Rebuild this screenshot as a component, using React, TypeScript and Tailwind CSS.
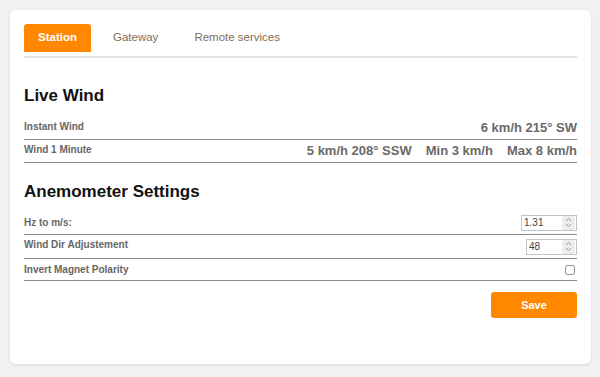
import React, { useState } from 'react';

const Spinner: React.FC = () => (
  <div className="flex h-[14px] w-[13px] flex-col items-center justify-center rounded-[2px] bg-[#ececec]">
    <svg className="h-[5px] w-[7px] text-[#9a9a9a]" viewBox="0 0 7 5" fill="none" stroke="currentColor">
      <path d="M1 4l2.5-2.5L6 4" strokeWidth={1} />
    </svg>
    <svg className="mt-[1px] h-[5px] w-[7px] text-[#9a9a9a]" viewBox="0 0 7 5" fill="none" stroke="currentColor">
      <path d="M1 1l2.5 2.5L6 1" strokeWidth={1} />
    </svg>
  </div>
);

const NumberBox: React.FC<{ value: string; width: string }> = ({ value, width }) => (
  <div className={`flex h-[16px] ${width} items-center justify-between border border-[#c4c4c4] bg-white pl-[2px] pr-[1px]`}>
    <span className="text-[10px] leading-none text-[#444]">{value}</span>
    <Spinner />
  </div>
);

const App: React.FC = () => {
  const [tab, setTab] = useState('Station');
  const tabs = ['Station', 'Gateway', 'Remote services'];

  return (
    <div className="min-h-screen bg-[#f1f1f1] p-[10px] font-['Liberation_Sans',Arial,sans-serif]">
      <div className="h-[354px] w-[581px] rounded-[6px] bg-white px-[14px] pt-[14px] pr-[14px] shadow-[0_1px_3px_rgba(0,0,0,0.1)]">
        {/* Tabs */}
        <div className="flex gap-[8px]">
          {tabs.map((t) => (
            <button
              key={t}
              onClick={() => setTab(t)}
              className={`h-[28px] rounded-t-[3px] px-[14px] text-[11.5px] ${
                tab === t ? 'bg-[#ff8800] font-bold text-white' : 'text-[#7f6d58]'
              }`}
            >
              {t}
            </button>
          ))}
        </div>
        <div className="mt-[4px] h-[2px] bg-[#e2e2e2]" />

        {/* Live Wind */}
        <h2 className="mt-[28px] text-[17px] font-bold leading-[20px] text-[#111]">Live Wind</h2>
        <div className="mt-[11px]">
          <div className="flex h-[23px] items-center justify-between border-b border-[#8c8c8c]">
            <span className="mb-[4px] text-[10px] font-bold text-[#666]">Instant Wind</span>
            <span className="text-[13px] font-bold text-[#6a6a6a]">6 km/h 215° SW</span>
          </div>
          <div className="flex h-[23px] items-center justify-between border-b border-[#8c8c8c]">
            <span className="mb-[4px] text-[10px] font-bold text-[#666]">Wind 1 Minute</span>
            <div className="flex gap-[14px] text-[13px] font-bold text-[#6a6a6a]">
              <span>5 km/h 208° SSW</span>
              <span>Min 3 km/h</span>
              <span>Max 8 km/h</span>
            </div>
          </div>
        </div>

        {/* Anemometer Settings */}
        <h2 className="mt-[19px] text-[17px] font-bold leading-[20px] text-[#111]">Anemometer Settings</h2>
        <div className="mt-[9px]">
          <div className="flex h-[24px] items-center justify-between border-b border-[#8c8c8c]">
            <span className="text-[10px] font-bold text-[#666]">Hz to m/s:</span>
            <NumberBox value="1.31" width="w-[56px]" />
          </div>
          <div className="flex h-[24px] items-center justify-between border-b border-[#8c8c8c]">
            <span className="mb-[5px] text-[10px] font-bold text-[#666]">Wind Dir Adjustement</span>
            <NumberBox value="48" width="w-[51px]" />
          </div>
          <div className="flex h-[22px] items-center justify-between border-b border-[#8c8c8c]">
            <span className="text-[10px] font-bold text-[#666]">Invert Magnet Polarity</span>
            <div className="mr-[2px] h-[10px] w-[10px] rounded-[2px] border border-[#999] bg-white" />
          </div>
        </div>

        <div className="mt-[11px] flex justify-end">
          <button className="h-[26px] w-[86px] rounded-[3px] bg-[#ff8800] text-[11px] font-bold text-white">
            Save
          </button>
        </div>
      </div>
    </div>
  );
};

export default App;
